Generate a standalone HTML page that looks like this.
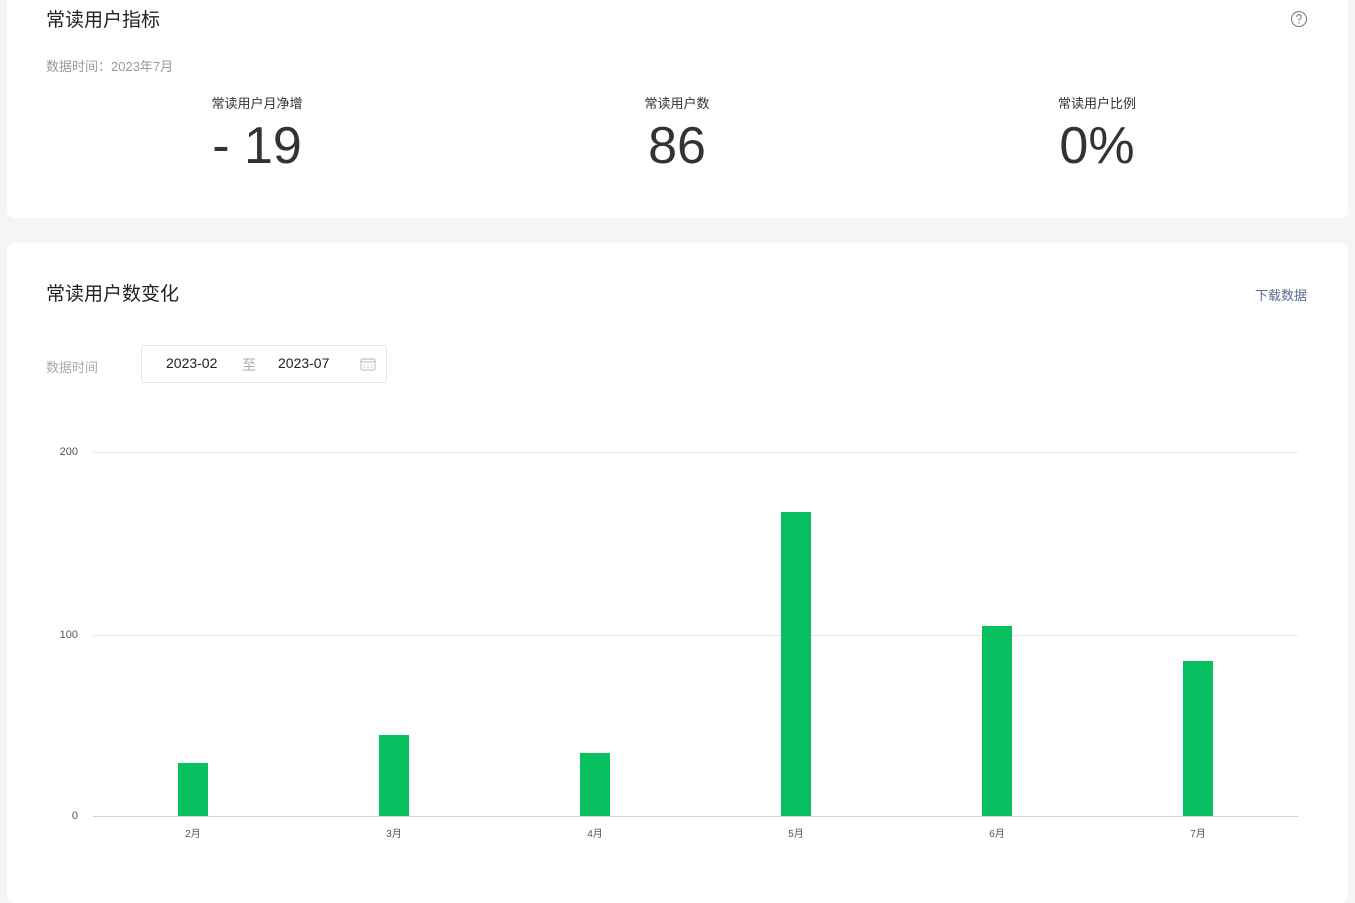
<!DOCTYPE html>
<html><head><meta charset="utf-8"><style>
*{margin:0;padding:0;box-sizing:border-box}
body{width:1355px;height:882px;background:#f4f5f7;font-family:"Liberation Sans","Noto Sans CJK SC",sans-serif;position:relative;overflow:hidden;color:#333}
.card{position:absolute;left:7px;width:1341px;background:#fff;border-radius:8px}
.abs{position:absolute;white-space:nowrap}
.stat{position:absolute;width:300px;text-align:center}
.stat .l{font-size:13px;color:#333;position:absolute;top:93px;width:100%}
.stat .v{font-size:52px;color:#333;position:absolute;top:116px;width:100%;font-weight:300}
.grid{position:absolute;left:93px;width:1205px;height:1px;background:#e6e8eb}
.bar{position:absolute;width:30px;background:#07c160}
.yl{position:absolute;font-size:11px;color:#555;right:1277px}
.xl{position:absolute;font-size:10px;color:#555;width:40px;text-align:center;top:825px}
</style></head><body>
<div class="card" style="top:-10px;height:228px"></div>
<div class="abs" style="left:46px;top:5px;font-size:19px;color:#222">常读用户指标</div>
<svg class="abs" style="left:1290px;top:10px" width="18" height="18" viewBox="0 0 18 18"><circle cx="9" cy="9" r="7.5" fill="none" stroke="#888" stroke-width="1.2"/><path d="M6.8 7a2.2 2.2 0 1 1 3 2c-.6.3-.8.7-.8 1.3v.5" fill="none" stroke="#888" stroke-width="1.2"/><circle cx="9" cy="12.8" r=".8" fill="#888"/></svg>
<div class="abs" style="left:46px;top:56px;font-size:13px;color:#999">数据时间：2023年7月</div>
<div class="stat" style="left:107px"><div class="l">常读用户月净增</div><div class="v">- 19</div></div>
<div class="stat" style="left:527px"><div class="l">常读用户数</div><div class="v">86</div></div>
<div class="stat" style="left:947px"><div class="l">常读用户比例</div><div class="v">0%</div></div>

<div class="card" style="top:243px;height:660px"></div>
<div class="abs" style="left:46px;top:279px;font-size:19px;color:#222">常读用户数变化</div>
<div class="abs" style="left:1255px;top:285px;font-size:13px;color:#576b95">下载数据</div>
<div class="abs" style="left:46px;top:357px;font-size:13px;color:#aaa">数据时间</div>
<div class="abs" style="left:141px;top:345px;width:246px;height:38px;border:1px solid #e4e6ea;border-radius:4px"></div>
<div class="abs" style="left:166px;top:355px;font-size:14px;color:#222">2023-02</div>
<div class="abs" style="left:242px;top:355px;font-size:14px;color:#aaa">至</div>
<div class="abs" style="left:278px;top:355px;font-size:14px;color:#222">2023-07</div>
<svg class="abs" style="left:360px;top:357px" width="16" height="14" viewBox="0 0 16 14"><rect x="1" y="2" width="14" height="11" rx="1.5" fill="none" stroke="#bbb"/><path d="M1 5h14M5 0.5v3M11 0.5v3" stroke="#bbb"/><path d="M4 8h1M7.5 8h1M11 8h1M4 10.5h1M7.5 10.5h1M11 10.5h1" stroke="#bbb"/></svg>

<div class="grid" style="top:452px"></div>
<div class="grid" style="top:635px"></div>
<div class="grid" style="top:816px;background:#c9d2e0"></div>
<div class="yl" style="top:446px">200</div>
<div class="yl" style="top:629px">100</div>
<div class="yl" style="top:810px">0</div>
<div class="bar" style="left:178px;top:763px;height:53px"></div>
<div class="bar" style="left:379px;top:735px;height:81px"></div>
<div class="bar" style="left:580px;top:753px;height:63px"></div>
<div class="bar" style="left:781px;top:512px;height:304px"></div>
<div class="bar" style="left:982px;top:626px;height:190px"></div>
<div class="bar" style="left:1183px;top:661px;height:155px"></div>
<div class="xl" style="left:173px">2月</div>
<div class="xl" style="left:374px">3月</div>
<div class="xl" style="left:575px">4月</div>
<div class="xl" style="left:776px">5月</div>
<div class="xl" style="left:977px">6月</div>
<div class="xl" style="left:1178px">7月</div>
</body></html>
